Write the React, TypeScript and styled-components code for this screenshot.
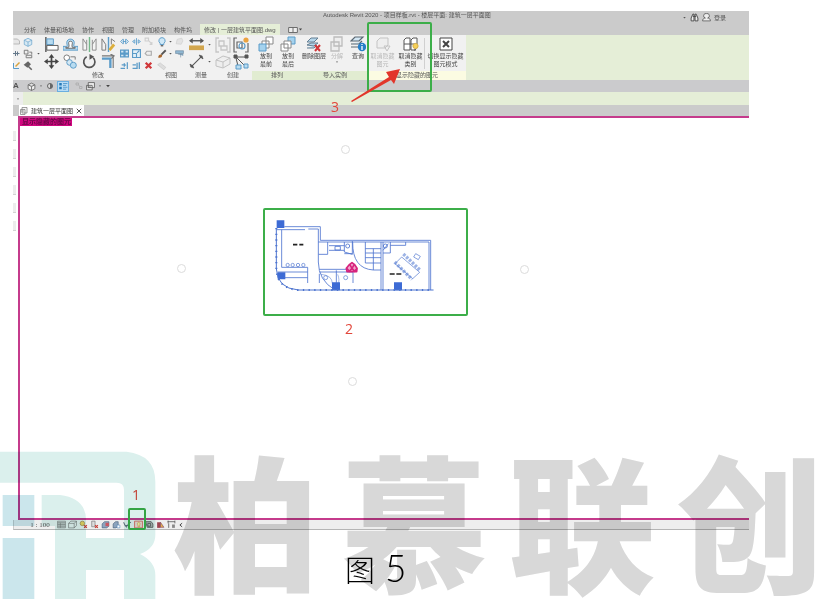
import React from "react";
import styled, { createGlobalStyle } from "styled-components";

const GlobalStyle = createGlobalStyle`
  body { margin: 0; background: #fff; }
  * { box-sizing: border-box; }
  button, select, a { font: inherit; color: inherit; }
`;

const Page = styled.main`
  position: relative;
  display: flex;
  flex-direction: column;
  min-height: 100vh;
  padding: 11px 70px 0 13px;
  overflow: hidden;
  background: #fff;
  color: #555;
  font: 6px/8px "Liberation Sans", "Noto Sans CJK SC", sans-serif;
`;

const Window = styled.section`
  position: relative;
  flex: 1;
  display: flex;
  flex-direction: column;
`;

const TitleBar = styled.header`
  display: flex;
  height: 13px;
  padding: 0 23px 0 310px;
  background: #cbcbcb;
  white-space: nowrap;
`;

const Account = styled.div`
  display: flex;
  align-items: center;
  gap: 3px;
  margin-left: auto;
`;

const PlainButton = styled.button`
  display: flex;
  align-items: center;
  justify-content: center;
  padding: 0;
  border: 0;
  background: none;
`;

const Tabs = styled.nav`
  display: flex;
  align-items: stretch;
  gap: 8px;
  height: 11px;
  padding-left: 11px;
  background: #cbcbcb;
  white-space: nowrap;
`;

const Tab = styled.button<{ $active?: boolean }>`
  padding: ${(p) => (p.$active ? "0 4px" : "0")};
  border: 0;
  background: ${(p) => (p.$active ? "#e5eed7" : "none")};
`;

const Ribbon = styled.div`
  display: flex;
  height: 45px;
  background: #e5eed7;
`;

const Panel = styled.section<{ $width: number }>`
  display: flex;
  flex-direction: column;
  flex: 0 0 ${(p) => p.$width}px;
`;

const PanelBody = styled.div<{ $pad?: number }>`
  display: flex;
  flex: 1;
  padding: 1px 0 0 ${(p) => p.$pad ?? 0}px;
  background: #f1f1f1;
`;

const PanelTitle = styled.h2<{ $tone: "plain" | "green" | "cream"; $indent?: number }>`
  height: 9px;
  margin: 0;
  padding-left: ${(p) => p.$indent ?? 0}px;
  background: ${(p) => ({ plain: "#f1f1f1", green: "#e1ecd1", cream: "#fbfbe2" })[p.$tone]};
  font: inherit;
  text-align: center;
  white-space: nowrap;
`;

const IconGrid = styled.div<{ $rows: 2 | 3; $col: number }>`
  display: grid;
  grid-auto-flow: column;
  grid-auto-columns: ${(p) => p.$col}px;
  grid-template-rows: repeat(${(p) => p.$rows}, ${(p) => (p.$rows === 2 ? 17 : 11)}px);
  row-gap: ${(p) => (p.$rows === 2 ? 0 : 1)}px;
`;

const Command = styled.button<{ $width: number; $off?: boolean }>`
  display: flex;
  flex-direction: column;
  align-items: center;
  flex: 0 0 ${(p) => p.$width}px;
  padding: 0;
  border: 0;
  background: none;
  white-space: nowrap;
  line-height: 8px;
  color: ${(p) => (p.$off ? "#b8b8b8" : "#444")};
`;

const Divider = styled.span`
  flex: 0 0 1px;
  margin: 2px 0;
  background: #d0d0d0;
`;

const QuickBar = styled.div`
  display: flex;
  align-items: center;
  gap: 3px;
  height: 12px;
  background: #cbcbcd;
`;

const QuickButton = styled(PlainButton)<{ $active?: boolean; $before?: number }>`
  height: 11px;
  min-width: ${(p) => (p.$active ? 12 : 5)}px;
  margin-left: ${(p) => p.$before ?? 0}px;
  background: ${(p) => (p.$active ? "#b8dcf5" : "none")};
  outline: ${(p) => (p.$active ? "1px solid #6aaee0" : "none")};
  outline-offset: -1px;
  font-weight: 700;
  font-size: 8px;
`;

const OptionsBar = styled.div`
  display: flex;
  height: 13px;
  background: #e5eed7;
`;

const OptionsEnd = styled.span`
  display: flex;
  align-items: center;
  justify-content: center;
  width: 10px;
  background: #ededed;
`;

const DocumentTabs = styled.div`
  display: flex;
  height: 11px;
  padding-left: 6px;
  background: #cbcbcb;
`;

const DocumentTab = styled.div`
  display: flex;
  align-items: center;
  gap: 3px;
  padding: 0 2px 0 1px;
  background: #fff;
  color: #333;
  white-space: nowrap;
`;

const Workspace = styled.div`
  flex: 1;
  display: flex;
`;

const Palette = styled.aside`
  display: flex;
  flex-direction: column;
  align-items: flex-start;
  gap: 8px;
  width: 5px;
  padding-top: 15px;
`;

const PaletteItem = styled.span`
  width: 3px;
  height: 10px;
  background: #ececec;
  border-bottom: 1px solid #d2d2d2;
`;

const Canvas = styled.div`
  position: relative;
  flex: 1;
  border: solid #c53b8c;
  border-width: 2px 0 2px 2px;
`;

const ModeLabel = styled.strong`
  display: block;
  width: 52px;
  height: 8px;
  padding-left: 2px;
  background: #d1067f;
  color: #6b0848;
  font-size: 7px;
  font-weight: 700;
  white-space: nowrap;
`;

const Marker = styled.span<{ $x: number; $y: number }>`
  position: absolute;
  left: ${(p) => p.$x}px;
  top: ${(p) => p.$y}px;
  width: 9px;
  height: 9px;
  border: 1px solid #dcdcdc;
  border-radius: 50%;
`;

const Outline = styled.div`
  position: absolute;
  border: 2px solid #3cae49;
  border-radius: 2px;
  pointer-events: none;
`;

const PlanOutline = styled(Outline)`
  left: 243px;
  top: 90px;
  width: 205px;
  height: 108px;
`;

const Plan = styled.svg`
  position: absolute;
  left: 5px;
  top: 7px;
`;

const CommandOutline = styled(Outline)`
  left: 354px;
  top: 11px;
  width: 65px;
  height: 70px;
`;

const StatusOutline = styled(Outline)`
  left: 115px;
  bottom: 0;
  width: 18px;
  height: 22px;
`;

const Step = styled.span`
  position: absolute;
  color: #e2463a;
  font: 14px/16px "Open Sans", sans-serif;
`;

const StepOne = styled(Step)`
  left: 119px;
  bottom: 27px;
`;

const StepTwo = styled(Step)`
  left: 325px;
  top: 203px;
`;

const StepThree = styled(Step)`
  left: 318px;
  top: 88px;
`;

const Arrow = styled.svg`
  position: absolute;
  left: 337px;
  top: 56px;
`;

const StatusBar = styled.footer`
  display: flex;
  align-items: center;
  height: 10px;
  padding-left: 15px;
  border-bottom: 1px solid #b5b5b5;
  border-left: 1px solid #ccc;
  background: #eee;
`;

const Scale = styled(PlainButton)`
  width: 22px;
  margin-right: 6px;
  font: 7px/8px "Liberation Serif", serif;
  white-space: nowrap;
`;

const StatusIcons = styled.div`
  display: flex;
  align-items: center;
  gap: 2px;
`;

const Caption = styled.p`
  display: flex;
  align-items: center;
  gap: 10px;
  height: 69px;
  margin: 0;
  padding: 6px 0 0 332px;
  color: #000;
  font: 300 30px/44px "Noto Sans CJK SC", sans-serif;
`;

const CaptionNumber = styled.span`
  font: 300 37px/44px Lato, sans-serif;
`;

const Watermark = styled.div`
  position: absolute;
  left: 0;
  bottom: 0;
  display: flex;
  mix-blend-mode: multiply;
  pointer-events: none;
`;

const WatermarkText = styled.div`
  display: grid;
  grid-template-columns: repeat(4, 168px);
  margin-left: 2px;
  color: #d8d8d8;
  font: 900 147px/144px "Noto Sans CJK SC", sans-serif;
  text-align: center;
`;

const blue = "#5b9bc8";
const dark = "#555";
const pale = "#cfcfcf";

const drawings: Record<string, React.ReactNode> = {
  cube: <path d="M2 5l6-3 6 3v7l-6 3-6-3zM2 5l6 3 6-3M8 8v7" fill="#d5e8f3" stroke={blue} />,
  cubeDark: <path d="M2 5l6-3 6 3v7l-6 3-6-3zM2 5l6 3 6-3M8 8v7" fill="#eee" stroke="#666" strokeWidth="1.5" />,
  blocks: <path d="M2 2h6v6H2zM5 10h9v4H5zM10 5h4v4" fill="#eee" stroke="#777" strokeWidth="1.5" />,
  hammer: <path d="M3 6l5-4 3 3-4 4zM8 8l6 6" fill="#666" stroke="#666" strokeWidth="2.5" />,
  edge: <path d="M1 3h8l4 4v6H1" fill="#e6e6e6" stroke="#aaa" strokeWidth="1.5" />,
  edgeBlue: <path d="M0 8h13M5 3v10M9 4v8" fill="none" stroke="#64788a" strokeWidth="2" />,
  pencil: <g><path d="M1 3v11h11" fill="none" stroke={blue} strokeWidth="2" /><path d="M5 10l8-8" stroke="#d7a33d" strokeWidth="3" /></g>,
  align: <g><path d="M2 0v16" stroke={dark} strokeWidth="1.5" /><path d="M3 2h7v6H3z" fill="#b9dcf1" stroke={blue} /><path d="M3 9h12v5H3z" fill="#fff" stroke={dark} /></g>,
  offset: <g><path d="M0 14h16v-4h-4c-1-1 0-2 0-4 0-5-8-5-8 0 0 2 1 3 0 4H0z" fill="#b9dcf1" stroke={blue} /><path d="M3 12h10v-1h-3c-1-2 0-3 0-5 0-2-4-2-4 0 0 2 1 3 0 5H3z" fill="#fff" stroke="#666" /></g>,
  mirror: <g fill="#f7f7f7" stroke="#8b8b8b"><path d="M1 14V2l4 6V3M1 14h4V8M15 14V2l-4 6V3M15 14h-4V8" /><path d="M8 0v16" stroke="#75b88a" strokeWidth="1.5" /></g>,
  mirrorPick: <g fill="none" stroke="#777"><path d="M1 14V2l4 6v6zM11 8V2l4 3" /><path d="M8 0v16" stroke={blue} strokeWidth="1.5" /><path d="M9 14l5-6" stroke="#dcae3c" strokeWidth="3" /></g>,
  move: <g stroke="#444" fill="#444"><path d="M8 3v10M3 8h10" strokeWidth="1.8" /><path d="M8 0l3 4H5zM8 16l3-4H5zM0 8l4-3v6zM16 8l-4-3v6z" stroke="none" /></g>,
  copy: <g fill="#fff" stroke="#777"><circle cx="4" cy="4" r="3" /><path d="M8 3h5v3" fill="none" /><circle cx="7" cy="9" r="3" fill="#d5e8f3" stroke={blue} /><circle cx="11" cy="12" r="3.2" fill="#b9dcf1" stroke={blue} /></g>,
  rotate: <g><path d="M5 3a6 6 0 1 0 7 1" fill="none" stroke="#555" strokeWidth="1.8" /><path d="M8 0l5 3-5 3z" fill="#555" /></g>,
  trim: <g fill="none"><path d="M1 5h9v10" stroke={blue} strokeWidth="2.5" /><path d="M1 2h12M13 3v12M10 0l4 2-3 3" stroke="#777" strokeWidth="1.2" /></g>,
  split: <path d="M1 8l4-4h1v8H5zM15 8l-4-4h-1v8h1zM5 8h6" fill="#d5e8f3" stroke={blue} strokeWidth="1.5" />,
  splitGap: <path d="M1 8l4-3v6zM15 8l-4-3v6zM8 2v12" fill="#d5e8f3" stroke={blue} strokeWidth="1.5" />,
  array: <path d="M1 2h6v5H1zM9 2h6v5H9zM1 9h6v5H1zM9 9h6v5H9z" fill="#d5e8f3" stroke={blue} strokeWidth="2" />,
  scale: <path d="M1 1h14v14H1zM1 8h7v7M9 7l4-4" fill="#e4f0f7" stroke={blue} strokeWidth="2" />,
  trimOne: <path d="M1 13h8M13 2v12M3 7h6l-2-3M9 7l-2 3" fill="none" stroke={blue} strokeWidth="2.2" />,
  trimMany: <path d="M1 13h8M13 2v12M9 3v11M1 7h6" fill="none" stroke={blue} strokeWidth="2.4" />,
  remove: <path d="M3 3l10 10M13 3L3 13" stroke="#d1373a" strokeWidth="4" />,
  pin: <path d="M2 2h6v5H2zM9 7l5 6M10 13h4V9" fill="none" stroke={pale} strokeWidth="2" />,
  unpin: <path d="M2 8l3-4h8v7H5z" fill="#eee" stroke="#aaa" strokeWidth="2" />,
  bulb: <g><path d="M8 1a5 5 0 0 0-3 9v2h6v-2a5 5 0 0 0-3-9z" fill="#cfe8f7" stroke={blue} strokeWidth="1.5" /><path d="M6 14h4" stroke={dark} strokeWidth="2" /></g>,
  brush: <g><path d="M7 9l7-7" stroke="#555" strokeWidth="3" /><path d="M2 14c0-5 3-6 6-5 1 4-2 5-6 5z" fill="#a8672e" /></g>,
  eraser: <path d="M1 6l4-3 9 7-3 4z" fill="#ddd" stroke="#c5c5c5" />,
  ghost: <path d="M2 12l2-8 8-2 2 5-3 6z" fill="#e3e3e3" stroke="#c9c9c9" />,
  paint: <path d="M1 3h14v5H1zM5 9h9v3M10 9v6" fill="#8fb7d2" stroke="#668399" />,
  measure: <g><path d="M1 4h14" stroke="#555" strokeWidth="1.5" /><path d="M0 4l4-3v6zM16 4l-4-3v6z" fill="#555" /><path d="M0 9h16v5H0z" fill="#d2a64e" /></g>,
  dimension: <g><path d="M2 14L14 2" stroke="#555" strokeWidth="1.2" /><path d="M1 11l4 4M11 1l4 4" stroke="#555" strokeWidth="1.5" /><circle cx="3" cy="13" r="1.5" fill="#555" /><circle cx="13" cy="3" r="1.5" fill="#555" /></g>,
  group: <path d="M4 1H1v14h3M12 1h3v14h-3M4 4h5v5H4zM6 9h6v4H6z" fill="none" stroke="#c6c6c6" strokeWidth="1.3" />,
  assembly: <g fill="none" stroke="#666" strokeWidth="1.2"><path d="M4 1H1v14h3M12 15h3V6" /><path d="M4 5h5v6H4z" fill="#fff" /><circle cx="9" cy="9" r="3" stroke={blue} /><circle cx="13" cy="3" r="2.6" fill="#eba340" stroke="none" /></g>,
  box: <path d="M1 6l7-4 7 2v6l-7 4-7-2zM1 6l7 2 7-4M8 8v6" fill="#eee" stroke="#c2c2c2" />,
  similar: <g fill="#fff" stroke="#555"><path d="M3 3h9M3 4l2 8M4 4l8 8" fill="none" /><path d="M1 1h3v3H1zM12 1h3v3h-3z" fill="#555" /><path d="M3 11h5v4H3zM11 10h4v4h-4z" fill="#b9dcf1" stroke={blue} /></g>,
  front: <g><path d="M8 1h7v7H8zM4 5h7v7H4z" fill="#fff" stroke="#888" /><path d="M1 8h7v7H1z" fill="#a4d2ee" stroke={blue} /></g>,
  back: <g><path d="M8 1h7v7H8z" fill="#a4d2ee" stroke={blue} /><path d="M4 5h7v7H4zM1 8h7v7H1z" fill="#fff" stroke="#888" /></g>,
  layers: <g><path d="M1 6l4-4h7l-4 4zM1 9l4-2h7l-4 3zM1 12h7l3-3" fill="#b5d7ec" stroke="#647e92" /><path d="M9 9l5 6M14 9l-5 6" stroke="#d1373a" strokeWidth="2" /></g>,
  explode: <path d="M5 1h8v9H5zM2 6h8v9H2z" fill="#eee" stroke="#bcbcbc" strokeWidth="1.3" />,
  query: <g><path d="M1 5l4-4h8l-4 4zM1 8h8l3-3M1 11h7" fill="#d3e7f4" stroke="#5b6873" strokeWidth="1.2" /><circle cx="12" cy="11" r="4.2" fill="#267fc8" /><path d="M12 10v4M12 8v1" stroke="#fff" strokeWidth="1.3" /></g>,
  unhide: <path d="M2 5l3-3h8v7l-3 3H2zM9 10h6l-3 5z" fill="#eee" stroke="#c3c3c3" />,
  unhideType: <g fill="#fff" stroke="#555"><path d="M1 4l2-2h4v12H1zM8 4l2-2h4v9l-2 3H8zM1 8h13" /><circle cx="12.5" cy="10" r="2.6" fill="#f5cf58" stroke="#d8b14a" /><path d="M12 13v2" /></g>,
  closeMode: <g stroke="#444"><path d="M2 2h12v12H2z" fill="#fff" /><path d="M5 5l6 6M11 5l-6 6" strokeWidth="2" /></g>,
  panel: <g><path d="M2 3h4v4H2zM2 9h4v4H2z" fill="#277ab8" /><path d="M8 4h7M8 7h5M8 10h7M8 13h5" stroke="#277ab8" /></g>,
  gear: <g><circle cx="8" cy="8" r="5" fill="#ddd" stroke="#666" strokeWidth="2" /><path d="M8 3v10a5 5 0 0 0 0-10" fill="#666" /></g>,
  sheet: <path d="M4 1h10v11H4zM1 5h9v10H1zM3 8h5" fill="#f8f8f8" stroke="#777" strokeWidth="1.4" />,
  switchWindow: <path d="M4 1h11v9H4zM1 6h10v8H1zM3 9h6" fill="#eee" stroke="#555" strokeWidth="1.4" />,
  links: <path d="M2 2h5v4H2zM9 9h5v4H9zM7 6l3 3" fill="none" stroke="#aaa" strokeWidth="1.5" />,
  binoculars: <path d="M2 14V9l3-7h2v12zM14 14V9l-3-7H9v12zM5 6h6" fill="#eee" stroke="#444" strokeWidth="1.6" />,
  user: <path d="M8 1a4 4 0 0 1 2 8c3 0 5 2 5 5H1c0-3 2-5 5-5a4 4 0 0 1 2-8z" fill="#eee" stroke="#555" strokeWidth="1.4" />,
  window: <path d="M1 4h14v8H1zM8 4v8" fill="#eee" stroke="#666" strokeWidth="1.5" />,
  caret: <path d="M3 5h10l-5 6z" fill="#444" />,
  dot: <path d="M4 6h8l-4 5z" fill="#555" />,
  close: <path d="M2 2l12 12M14 2L2 14" stroke="#333" strokeWidth="2.2" />,
  chevron: <path d="M11 3L5 8l6 5" fill="none" stroke="#444" strokeWidth="2.5" />,
  detail: <path d="M1 2h14v12H1zM1 5h14M1 8h14M1 11h14M6 5v9" fill="#ccc" stroke="#777" />,
  style: <path d="M1 6l4-4h10v8l-4 4H1zM1 6h10l4-4M11 6v8" fill="#eee" stroke="#666" />,
  sun: <g><circle cx="6" cy="6" r="4" fill="#f0cf62" stroke="#8f7330" /><path d="M9 9l5 5M14 9l-5 5" stroke="#ca3d35" strokeWidth="2" /></g>,
  shadow: <g><path d="M3 2h6v10H3z" fill="#ddd" stroke="#666" /><path d="M9 9l5 5M14 9l-5 5" stroke="#ca3d35" strokeWidth="2" /></g>,
  crop: <g><path d="M2 7l4-4h8v8l-4 3H2z" fill="#8da4bd" stroke="#3d5573" /><path d="M8 5h6v6H8z" fill="#cb5660" /></g>,
  cropView: <g><path d="M2 7l4-4h5v8l-4 3H2z" fill="#8da4bd" stroke="#3d5573" /><path d="M9 9h5v5H9z" fill="#fff" stroke="#4982bb" /></g>,
  glasses: <path d="M1 4l3 6h4l2-4 4-2M4 10l3 3" fill="none" stroke="#65727e" strokeWidth="1.8" />,
  reveal: <g><path d="M1 2h14v12H1z" fill="#f6d8d2" stroke="#e0665a" strokeWidth="1.5" /><path d="M8 4a3 3 0 0 0-1 5v3h3V9a3 3 0 0 0-2-5z" fill="#fff0a2" stroke="#d48c3e" /></g>,
  temp: <path d="M1 3h10l3 4v6H4zM5 6h5v5H5z" fill="#bbb" stroke="#555" strokeWidth="1.5" />,
  analytic: <g><path d="M2 14V4h6v10z" fill="#9e4552" /><path d="M8 4l6 9H8z" fill="#e5b34c" stroke="#735" /></g>,
  constraint: <g><path d="M1 3h13M2 1v5M14 1v5M3 6v8" stroke="#555" fill="none" strokeWidth="1.4" /><path d="M9 8h5v6H9z" fill="#888" /></g>,
};

const Icon = ({ name, size }: { name: string; size: number }) => (
  <svg width={size} height={size} viewBox="0 0 16 16" aria-hidden="true">
    {drawings[name]}
  </svg>
);

const Tools = ({ names, size, rows, col }: { names: string[]; size: number; rows: 2 | 3; col: number }) => (
  <IconGrid $rows={rows} $col={col}>
    {names.map((name, i) =>
      name ? (
        <PlainButton key={i} aria-label={name}>
          <Icon name={name} size={name === "dot" ? 5 : size} />
        </PlainButton>
      ) : (
        <span key={i} />
      )
    )}
  </IconGrid>
);

const LabelledTool = ({ icon, lines, width, off, menu }: { icon: string; lines: string[]; width: number; off?: boolean; menu?: boolean }) => (
  <Command $width={width} $off={off} disabled={off}>
    <Icon name={icon} size={16} />
    {lines.map((line) => (
      <span key={line}>{line}</span>
    ))}
    {menu && <Icon name="dot" size={4} />}
  </Command>
);

const FloorPlan = () => (
  <Plan width="165" height="77" viewBox="45 50 495 231" fill="none" stroke="#4d74cf" strokeWidth="2.5" aria-label="一层建筑平面图">
    <g fill="#3d6bd5" stroke="none">
      <path d="M65 60h23v23H65zM68 216h23v21H68zM231 246h24v24h-24zM417 246h24v24h-24z" />
    </g>
    <path d="M64 83V205Q66 264 130 269H535" strokeWidth="3" />
    <path d="M64 83V205Q66 264 130 269H535" strokeWidth="6" strokeDasharray="4 13" />
    <path d="M88 79H196V120H527V269M66 88H150M160 86H190V125H522V269" />
    <path d="M80 88V201H158V248M68 215H158M88 232H158" />
    <path d="M190 125V162H218V125M222 136H268M222 150H268M240 138h16v11h-16zM268 125V155L292 162V122M268 160H292" />
    <path d="M190 162V185Q190 240 240 269M193 207H294V248M193 215H294M193 220V248M244 210V248" />
    <path d="M198 222Q232 225 232 250M248 222Q255 240 249 250" strokeWidth="1.5" />
    <path d="M293 125Q292 205 355 209H378M331 125V188H378M331 145H378M331 158H378M331 172H378M355 145V209M378 125V269" />
    <path d="M384 125V266M384 158H406V125M406 135H452V125M384 150L400 130" />
    <circle cx="278" cy="137" r="6" />
    <circle cx="391" cy="137" r="6" />
    <g strokeWidth="2">
      <circle cx="98" cy="194" r="5" />
      <circle cx="113" cy="194" r="5" />
      <circle cx="129" cy="194" r="5" />
      <circle cx="145" cy="194" r="5" />
      <circle cx="212" cy="232" r="6" />
      <circle cx="272" cy="232" r="6" />
      <path d="M440 170L494 216L473 235L420 190zM482 160l14 8-6 10-14-8z" />
      <path d="M445 161L496 210M419 185L471 237" strokeWidth="10" strokeDasharray="8 4" opacity=".55" />
    </g>
    <path d="M114 133h13M133 133h12M404 221h15M424 221h15" stroke="#222" strokeWidth="5" />
    <g stroke="#d6247e" strokeWidth="5" fill="#f4a6cc" strokeLinejoin="round">
      <path d="M284 192l7-5 7 5 8 12-1 10h-29l-2-10z" />
      <path d="M284 192l7 12 7-12M275 204l8 9 8-9 8 9 7-9" fill="none" />
    </g>
  </Plan>
);

const statusIcons = ["detail", "style", "sun", "shadow", "crop", "cropView", "glasses", "reveal", "temp", "analytic", "constraint", "chevron"];
const tabs = ["分析", "体量和场地", "协作", "视图", "管理", "附加模块", "构件坞"];

export default function App() {
  return (
    <>
      <GlobalStyle />
      <Page>
        <Window>
          <TitleBar>
            <span>Autodesk Revit 2020 - 项目样板.rvt - 楼层平面: 建筑一层平面图</span>
            <Account>
              <Icon name="dot" size={5} />
              <Icon name="binoculars" size={9} />
              <Icon name="user" size={9} />
              <PlainButton>登录</PlainButton>
            </Account>
          </TitleBar>
          <Tabs>
            {tabs.map((tab) => (
              <Tab key={tab}>{tab}</Tab>
            ))}
            <Tab $active>修改 | 一层建筑平面图.dwg</Tab>
            <PlainButton aria-label="显示选项">
              <Icon name="window" size={10} />
              <Icon name="caret" size={5} />
            </PlainButton>
          </Tabs>
          <Ribbon>
            <Panel $width={141}>
              <PanelBody>
                <Tools names={["edge", "edgeBlue", "pencil"]} size={9} rows={3} col={8} />
                <Tools names={["cube", "blocks", "hammer"]} size={10} rows={3} col={13} />
                <Tools names={["", "dot", ""]} size={5} rows={3} col={8} />
                <Tools names={["align", "move", "offset", "copy", "mirror", "rotate", "mirrorPick", "trim"]} size={15} rows={2} col={19} />
                <Tools names={["split", "array", "trimOne", "splitGap", "scale", "trimMany", "pin", "unpin", "remove"]} size={9} rows={3} col={12} />
              </PanelBody>
              <PanelTitle $tone="plain" $indent={29}>修改</PanelTitle>
            </Panel>
            <Panel $width={34}>
              <PanelBody $pad={2}>
                <Tools names={["bulb", "brush", "eraser"]} size={10} rows={3} col={11} />
                <Tools names={["dot", "dot", ""]} size={5} rows={3} col={6} />
                <Tools names={["ghost", "paint", ""]} size={9} rows={3} col={13} />
              </PanelBody>
              <PanelTitle $tone="plain">视图</PanelTitle>
            </Panel>
            <Panel $width={26}>
              <PanelBody>
                <Tools names={["measure", "dimension"]} size={15} rows={2} col={17} />
                <Tools names={["dot", "dot"]} size={5} rows={2} col={8} />
              </PanelBody>
              <PanelTitle $tone="plain">测量</PanelTitle>
            </Panel>
            <Panel $width={38}>
              <PanelBody>
                <Tools names={["group", "box", "assembly", "similar"]} size={16} rows={2} col={18} />
              </PanelBody>
              <PanelTitle $tone="plain">创建</PanelTitle>
            </Panel>
            <Panel $width={50}>
              <PanelBody $pad={3}>
                <LabelledTool icon="front" lines={["放到", "最前"]} width={22} />
                <LabelledTool icon="back" lines={["放到", "最后"]} width={22} />
              </PanelBody>
              <PanelTitle $tone="green">排列</PanelTitle>
            </Panel>
            <Panel $width={66}>
              <PanelBody>
                <LabelledTool icon="layers" lines={["删除图层"]} width={24} />
                <LabelledTool icon="explode" lines={["分解"]} width={22} off menu />
                <LabelledTool icon="query" lines={["查询"]} width={20} />
              </PanelBody>
              <PanelTitle $tone="green">导入实例</PanelTitle>
            </Panel>
            <Panel $width={98}>
              <PanelBody>
                <LabelledTool icon="unhide" lines={["取消隐藏", "图元"]} width={29} off />
                <LabelledTool icon="unhideType" lines={["取消隐藏", "类别"]} width={27} />
                <Divider />
                <LabelledTool icon="closeMode" lines={["切换显示隐藏", "图元模式"]} width={41} />
              </PanelBody>
              <PanelTitle $tone="cream">显示隐藏的图元</PanelTitle>
            </Panel>
          </Ribbon>
          <QuickBar>
            <QuickButton>A</QuickButton>
            <QuickButton $before={5} aria-label="三维视图"><Icon name="cubeDark" size={9} /></QuickButton>
            <Icon name="dot" size={4} />
            <QuickButton aria-label="剖面"><Icon name="gear" size={8} /></QuickButton>
            <QuickButton $active aria-label="细线"><Icon name="panel" size={10} /></QuickButton>
            <QuickButton $before={3} aria-label="关闭隐藏窗口"><Icon name="links" size={8} /></QuickButton>
            <QuickButton aria-label="切换窗口"><Icon name="switchWindow" size={9} /></QuickButton>
            <Icon name="dot" size={4} />
            <Icon name="caret" size={6} />
          </QuickBar>
          <OptionsBar>
            <OptionsEnd><Icon name="dot" size={4} /></OptionsEnd>
          </OptionsBar>
          <DocumentTabs>
            <DocumentTab>
              <Icon name="sheet" size={8} />
              <span>建筑一层平面图</span>
              <PlainButton aria-label="关闭"><Icon name="close" size={6} /></PlainButton>
            </DocumentTab>
          </DocumentTabs>
          <Workspace>
            <Palette>
              <PaletteItem /><PaletteItem /><PaletteItem /><PaletteItem /><PaletteItem /><PaletteItem />
            </Palette>
            <Canvas>
              <ModeLabel>显示隐藏的图元</ModeLabel>
              <Marker $x={321} $y={27} />
              <Marker $x={157} $y={146} />
              <Marker $x={500} $y={147} />
              <Marker $x={328} $y={259} />
              <PlanOutline>
                <FloorPlan />
              </PlanOutline>
              <StepTwo>2</StepTwo>
            </Canvas>
          </Workspace>
          <StatusBar>
            <Scale>1 : 100</Scale>
            <StatusIcons>
              {statusIcons.map((name) => (
                <PlainButton key={name} aria-label={name}>
                  <Icon name={name} size={name === "chevron" ? 6 : 9} />
                </PlainButton>
              ))}
            </StatusIcons>
          </StatusBar>
          <CommandOutline />
          <Arrow width="54" height="36" viewBox="0 0 54 36" fill="#e2352b">
            <path d="M50 2L36 5L39 10L1 34L2 35L41 13L44 17Z" />
          </Arrow>
          <StepThree>3</StepThree>
          <StatusOutline />
          <StepOne>1</StepOne>
        </Window>
        <Watermark aria-hidden="true">
          <svg width="160" height="154" viewBox="0 0 480 462">
            <path fill="#dbf0ed" d="M0 20H380Q466 30 466 110V270Q466 310 420 327Q466 350 466 390V462H372V375H258V462H165V243H125V150H180Q258 160 258 225V279H372V135Q372 113 350 113H0Z" />
            <path fill="#cbe6ec" d="M8 150H103V243H8zM8 279H103V462H8z" />
          </svg>
          <WatermarkText>
            <span>柏</span>
            <span>慕</span>
            <span>联</span>
            <span>创</span>
          </WatermarkText>
        </Watermark>
        <Caption>
          图<CaptionNumber>5</CaptionNumber>
        </Caption>
      </Page>
    </>
  );
}
